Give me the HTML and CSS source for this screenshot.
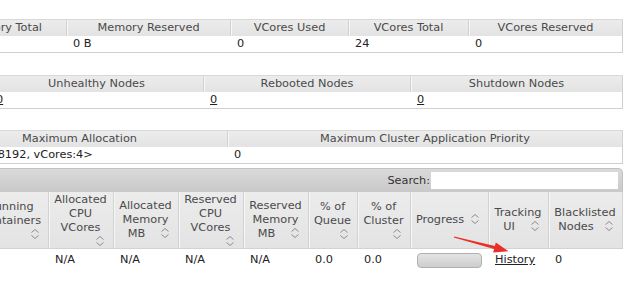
FILE: index.html
```html
<!DOCTYPE html>
<html lang="en">
<head>
  <meta charset="UTF-8">
  <title>All Applications</title>
  <link rel="stylesheet" href="styles.css">
</head>
<body>
  <div class="page">
    <table class="info cluster">
      <colgroup>
        <col class="w-125"><col class="w-164"><col class="w-118"><col class="w-120"><col class="w-154">
      </colgroup>
      <thead>
        <tr><th>Memory Total</th><th>Memory Reserved</th><th>VCores Used</th><th>VCores Total</th><th>VCores Reserved</th></tr>
      </thead>
      <tbody>
        <tr><td>64 GB</td><td>0 B</td><td>0</td><td>24</td><td>0</td></tr>
      </tbody>
    </table>

    <table class="info nodes">
      <colgroup>
        <col class="w-214"><col class="w-207"><col class="w-212">
      </colgroup>
      <thead>
        <tr><th>Unhealthy Nodes</th><th>Rebooted Nodes</th><th>Shutdown Nodes</th></tr>
      </thead>
      <tbody>
        <tr><td><a href="#">0</a></td><td><a href="#">0</a></td><td><a href="#">0</a></td></tr>
      </tbody>
    </table>

    <table class="info sched">
      <colgroup>
        <col class="w-296"><col class="w-395">
      </colgroup>
      <thead>
        <tr><th>Maximum Allocation</th><th>Maximum Cluster Application Priority</th></tr>
      </thead>
      <tbody>
        <tr><td>&lt;memory:8192, vCores:4&gt;</td><td>0</td></tr>
      </tbody>
    </table>

    <div class="apps-wrap">
      <div class="toolbar">
        <label>Search:<input type="text"></label>
      </div>
      <table class="apps">
        <colgroup>
          <col class="w-75"><col class="w-65"><col class="w-65"><col class="w-65"><col class="w-65">
          <col class="w-49"><col class="w-53"><col class="w-78"><col class="w-60"><col class="w-74">
        </colgroup>
        <thead>
          <tr>
            <th>Running Containers<span class="sort"><svg viewBox="0 0 16 12"><path d="M4.5 4.5 8 1.5 11.5 4.5M4.5 7.5 8 10.5 11.5 7.5"/></svg></span></th>
            <th>Allocated CPU VCores<span class="sort"><svg viewBox="0 0 16 12"><path d="M4.5 4.5 8 1.5 11.5 4.5M4.5 7.5 8 10.5 11.5 7.5"/></svg></span></th>
            <th>Allocated Memory MB<span class="sort"><svg viewBox="0 0 16 12"><path d="M4.5 4.5 8 1.5 11.5 4.5M4.5 7.5 8 10.5 11.5 7.5"/></svg></span></th>
            <th>Reserved CPU VCores<span class="sort"><svg viewBox="0 0 16 12"><path d="M4.5 4.5 8 1.5 11.5 4.5M4.5 7.5 8 10.5 11.5 7.5"/></svg></span></th>
            <th>Reserved Memory MB<span class="sort"><svg viewBox="0 0 16 12"><path d="M4.5 4.5 8 1.5 11.5 4.5M4.5 7.5 8 10.5 11.5 7.5"/></svg></span></th>
            <th>% of Queue<span class="sort"><svg viewBox="0 0 16 12"><path d="M4.5 4.5 8 1.5 11.5 4.5M4.5 7.5 8 10.5 11.5 7.5"/></svg></span></th>
            <th>% of Cluster<span class="sort"><svg viewBox="0 0 16 12"><path d="M4.5 4.5 8 1.5 11.5 4.5M4.5 7.5 8 10.5 11.5 7.5"/></svg></span></th>
            <th>Progress<span class="sort"><svg viewBox="0 0 16 12"><path d="M4.5 4.5 8 1.5 11.5 4.5M4.5 7.5 8 10.5 11.5 7.5"/></svg></span></th>
            <th>Tracking UI<span class="sort"><svg viewBox="0 0 16 12"><path d="M4.5 4.5 8 1.5 11.5 4.5M4.5 7.5 8 10.5 11.5 7.5"/></svg></span></th>
            <th>Blacklisted Nodes<span class="sort"><svg viewBox="0 0 16 12"><path d="M4.5 4.5 8 1.5 11.5 4.5M4.5 7.5 8 10.5 11.5 7.5"/></svg></span></th>
          </tr>
        </thead>
        <tbody>
          <tr>
            <td>0</td><td>N/A</td><td>N/A</td><td>N/A</td><td>N/A</td>
            <td>0.0</td><td>0.0</td>
            <td><span class="progress"></span></td>
            <td><a href="#">History</a></td>
            <td>0</td>
          </tr>
        </tbody>
      </table>
    </div>
  </div>

  <svg class="arrow" width="630" height="281" viewBox="0 0 630 281">
    <polygon points="454.2,236.4 494.9,246 495.8,242.5 508.5,251.3 493.1,252.6 494.1,249 453.8,237.6"/>
  </svg>
</body>
</html>
```

FILE: styles.css
```css
body {
  margin: 0;
  background: #fff;
  font-family: "DejaVu Sans", "Liberation Sans", sans-serif;
  font-size: 11.3px;
  color: #222;
  position: relative;
  height: 281px;
  overflow: hidden;
}
.page {
  width: 623px;
  padding-top: 19px;
  overflow: hidden;
}
a {
  color: #222;
}

/* small info tables */
.info {
  border-collapse: separate;
  border-spacing: 0;
  table-layout: fixed;
  margin-bottom: 21.5px;
}
.info th {
  font-weight: normal;
  color: #4a4a4a;
  line-height: 14px;
  padding: 1px 4px;
  background: linear-gradient(#ececec, #e3e3e3);
  border-top: 1px solid #d8d8d8;
  border-right: 1px solid #d2d2d2;
  box-shadow: inset 1px 0 0 #f6f6f6;
  white-space: nowrap;
  overflow: hidden;
}
.info td {
  line-height: 14px;
  padding: 1px 6px;
  border-bottom: 1px solid #cfcfcf;
  white-space: nowrap;
  overflow: hidden;
}
.info td:last-child {
  border-right: 1px solid #cfcfcf;
}
.cluster { width: 681px; margin-left: -58px; }
.nodes { width: 633px; margin-left: -10px; }
.sched { width: 691px; margin-left: -68px; margin-bottom: 3.5px; }

.w-125 { width: 125px; }
.w-164 { width: 164px; }
.w-118 { width: 118px; }
.w-120 { width: 120px; }
.w-154 { width: 154px; }
.w-214 { width: 214px; }
.w-207 { width: 207px; }
.w-212 { width: 212px; }
.w-296 { width: 296px; }
.w-395 { width: 395px; }
.w-75 { width: 75px; }
.w-65 { width: 65px; }
.w-49 { width: 49px; }
.w-53 { width: 53px; }
.w-78 { width: 78px; }
.w-60 { width: 60px; }
.w-74 { width: 74px; }

/* applications table */
.apps-wrap {
  width: 649px;
  margin-left: -26px;
}
.toolbar {
  height: 17px;
  padding: 3px 4px 3px;
  background: linear-gradient(#dadada, #c9c9c9);
  border: 1px solid #c2c2c2;
  border-bottom: none;
  border-top-right-radius: 5px;
  display: flex;
  justify-content: flex-end;
  align-items: center;
}
.toolbar label {
  display: flex;
  align-items: center;
  color: #333;
}
.toolbar input {
  width: 187px;
  height: 17px;
  box-sizing: border-box;
  margin: 0 0 0 1px;
  border: none;
  padding: 0 2px;
  background: #fff;
}
.apps {
  width: 649px;
  border-collapse: separate;
  border-spacing: 0;
  table-layout: fixed;
}
.apps th {
  font-weight: normal;
  color: #4a4a4a;
  line-height: 14px;
  padding: 1px 5px 1px 4px;
  background: linear-gradient(#ececec, #e3e3e3);
  border-right: 1px solid #d2d2d2;
  border-bottom: 1px solid #d2d2d2;
  box-shadow: inset 1px 0 0 #f6f6f6;
  vertical-align: middle;
  text-align: center;
  height: 54px;
}
.sort {
  float: right;
  width: 16px;
  height: 12px;
  margin-left: 2px;
}
.sort svg {
  display: block;
  width: 16px;
  height: 12px;
  fill: none;
  stroke: #8c8c8c;
  stroke-width: 1;
}
.apps td {
  line-height: 14px;
  padding: 4px 6px;
  white-space: nowrap;
  overflow: hidden;
  vertical-align: middle;
}
.progress {
  display: inline-block;
  vertical-align: middle;
  width: 63px;
  height: 13px;
  border: 1px solid #b0b0b0;
  border-radius: 4px;
  background: linear-gradient(#e4e4e4, #cdcdcd);
}

.arrow {
  position: absolute;
  top: 0;
  left: 0;
  pointer-events: none;
}
.arrow polygon {
  fill: #e8302a;
}
```
